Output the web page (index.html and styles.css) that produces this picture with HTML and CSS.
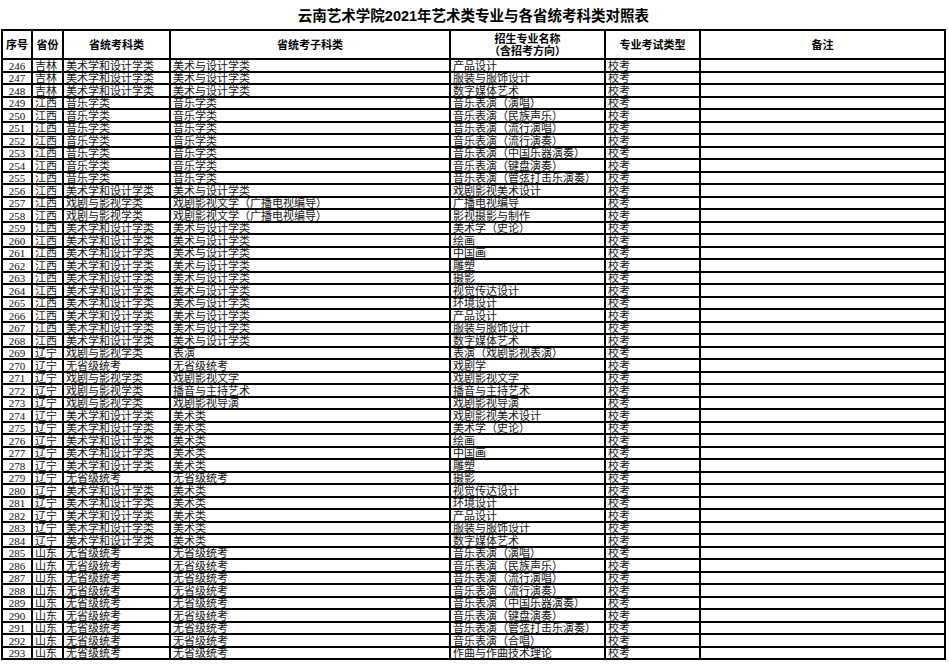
FILE: index.html
```html
<!DOCTYPE html>
<html lang="zh">
<head>
<meta charset="utf-8">
<title>云南艺术学院2021年艺术类专业与各省统考科类对照表</title>
<link rel="stylesheet" href="styles.css">
</head>
<body>
<h1 class="title">云南艺术学院2021年艺术类专业与各省统考科类对照表</h1>
<table class="sheet">
<colgroup>
<col class="c-no"><col class="c-prov"><col class="c-cat"><col class="c-sub"><col class="c-major"><col class="c-type"><col class="c-note">
</colgroup>
<thead>
<tr><th>序号</th><th>省份</th><th>省统考科类</th><th>省统考子科类</th><th>招生专业名称<br>（含招考方向）</th><th>专业考试类型</th><th>备注</th></tr>
</thead>
<tbody>
<tr><td class="no">246</td><td>吉林</td><td>美术学和设计学类</td><td>美术与设计学类</td><td>产品设计</td><td>校考</td><td></td></tr>
<tr><td class="no">247</td><td>吉林</td><td>美术学和设计学类</td><td>美术与设计学类</td><td>服装与服饰设计</td><td>校考</td><td></td></tr>
<tr><td class="no">248</td><td>吉林</td><td>美术学和设计学类</td><td>美术与设计学类</td><td>数字媒体艺术</td><td>校考</td><td></td></tr>
<tr><td class="no">249</td><td>江西</td><td>音乐学类</td><td>音乐学类</td><td>音乐表演（演唱）</td><td>校考</td><td></td></tr>
<tr><td class="no">250</td><td>江西</td><td>音乐学类</td><td>音乐学类</td><td>音乐表演（民族声乐）</td><td>校考</td><td></td></tr>
<tr><td class="no">251</td><td>江西</td><td>音乐学类</td><td>音乐学类</td><td>音乐表演（流行演唱）</td><td>校考</td><td></td></tr>
<tr><td class="no">252</td><td>江西</td><td>音乐学类</td><td>音乐学类</td><td>音乐表演（流行演奏）</td><td>校考</td><td></td></tr>
<tr><td class="no">253</td><td>江西</td><td>音乐学类</td><td>音乐学类</td><td>音乐表演（中国乐器演奏）</td><td>校考</td><td></td></tr>
<tr><td class="no">254</td><td>江西</td><td>音乐学类</td><td>音乐学类</td><td>音乐表演（键盘演奏）</td><td>校考</td><td></td></tr>
<tr><td class="no">255</td><td>江西</td><td>音乐学类</td><td>音乐学类</td><td>音乐表演（管弦打击乐演奏）</td><td>校考</td><td></td></tr>
<tr><td class="no">256</td><td>江西</td><td>美术学和设计学类</td><td>美术与设计学类</td><td>戏剧影视美术设计</td><td>校考</td><td></td></tr>
<tr><td class="no">257</td><td>江西</td><td>戏剧与影视学类</td><td>戏剧影视文学（广播电视编导）</td><td>广播电视编导</td><td>校考</td><td></td></tr>
<tr><td class="no">258</td><td>江西</td><td>戏剧与影视学类</td><td>戏剧影视文学（广播电视编导）</td><td>影视摄影与制作</td><td>校考</td><td></td></tr>
<tr><td class="no">259</td><td>江西</td><td>美术学和设计学类</td><td>美术与设计学类</td><td>美术学（史论）</td><td>校考</td><td></td></tr>
<tr><td class="no">260</td><td>江西</td><td>美术学和设计学类</td><td>美术与设计学类</td><td>绘画</td><td>校考</td><td></td></tr>
<tr><td class="no">261</td><td>江西</td><td>美术学和设计学类</td><td>美术与设计学类</td><td>中国画</td><td>校考</td><td></td></tr>
<tr><td class="no">262</td><td>江西</td><td>美术学和设计学类</td><td>美术与设计学类</td><td>雕塑</td><td>校考</td><td></td></tr>
<tr><td class="no">263</td><td>江西</td><td>美术学和设计学类</td><td>美术与设计学类</td><td>摄影</td><td>校考</td><td></td></tr>
<tr><td class="no">264</td><td>江西</td><td>美术学和设计学类</td><td>美术与设计学类</td><td>视觉传达设计</td><td>校考</td><td></td></tr>
<tr><td class="no">265</td><td>江西</td><td>美术学和设计学类</td><td>美术与设计学类</td><td>环境设计</td><td>校考</td><td></td></tr>
<tr><td class="no">266</td><td>江西</td><td>美术学和设计学类</td><td>美术与设计学类</td><td>产品设计</td><td>校考</td><td></td></tr>
<tr><td class="no">267</td><td>江西</td><td>美术学和设计学类</td><td>美术与设计学类</td><td>服装与服饰设计</td><td>校考</td><td></td></tr>
<tr><td class="no">268</td><td>江西</td><td>美术学和设计学类</td><td>美术与设计学类</td><td>数字媒体艺术</td><td>校考</td><td></td></tr>
<tr><td class="no">269</td><td>辽宁</td><td>戏剧与影视学类</td><td>表演</td><td>表演（戏剧影视表演）</td><td>校考</td><td></td></tr>
<tr><td class="no">270</td><td>辽宁</td><td>无省级统考</td><td>无省级统考</td><td>戏剧学</td><td>校考</td><td></td></tr>
<tr><td class="no">271</td><td>辽宁</td><td>戏剧与影视学类</td><td>戏剧影视文学</td><td>戏剧影视文学</td><td>校考</td><td></td></tr>
<tr><td class="no">272</td><td>辽宁</td><td>戏剧与影视学类</td><td>播音与主持艺术</td><td>播音与主持艺术</td><td>校考</td><td></td></tr>
<tr><td class="no">273</td><td>辽宁</td><td>戏剧与影视学类</td><td>戏剧影视导演</td><td>戏剧影视导演</td><td>校考</td><td></td></tr>
<tr><td class="no">274</td><td>辽宁</td><td>美术学和设计学类</td><td>美术类</td><td>戏剧影视美术设计</td><td>校考</td><td></td></tr>
<tr><td class="no">275</td><td>辽宁</td><td>美术学和设计学类</td><td>美术类</td><td>美术学（史论）</td><td>校考</td><td></td></tr>
<tr><td class="no">276</td><td>辽宁</td><td>美术学和设计学类</td><td>美术类</td><td>绘画</td><td>校考</td><td></td></tr>
<tr><td class="no">277</td><td>辽宁</td><td>美术学和设计学类</td><td>美术类</td><td>中国画</td><td>校考</td><td></td></tr>
<tr><td class="no">278</td><td>辽宁</td><td>美术学和设计学类</td><td>美术类</td><td>雕塑</td><td>校考</td><td></td></tr>
<tr><td class="no">279</td><td>辽宁</td><td>无省级统考</td><td>无省级统考</td><td>摄影</td><td>校考</td><td></td></tr>
<tr><td class="no">280</td><td>辽宁</td><td>美术学和设计学类</td><td>美术类</td><td>视觉传达设计</td><td>校考</td><td></td></tr>
<tr><td class="no">281</td><td>辽宁</td><td>美术学和设计学类</td><td>美术类</td><td>环境设计</td><td>校考</td><td></td></tr>
<tr><td class="no">282</td><td>辽宁</td><td>美术学和设计学类</td><td>美术类</td><td>产品设计</td><td>校考</td><td></td></tr>
<tr><td class="no">283</td><td>辽宁</td><td>美术学和设计学类</td><td>美术类</td><td>服装与服饰设计</td><td>校考</td><td></td></tr>
<tr><td class="no">284</td><td>辽宁</td><td>美术学和设计学类</td><td>美术类</td><td>数字媒体艺术</td><td>校考</td><td></td></tr>
<tr><td class="no">285</td><td>山东</td><td>无省级统考</td><td>无省级统考</td><td>音乐表演（演唱）</td><td>校考</td><td></td></tr>
<tr><td class="no">286</td><td>山东</td><td>无省级统考</td><td>无省级统考</td><td>音乐表演（民族声乐）</td><td>校考</td><td></td></tr>
<tr><td class="no">287</td><td>山东</td><td>无省级统考</td><td>无省级统考</td><td>音乐表演（流行演唱）</td><td>校考</td><td></td></tr>
<tr><td class="no">288</td><td>山东</td><td>无省级统考</td><td>无省级统考</td><td>音乐表演（流行演奏）</td><td>校考</td><td></td></tr>
<tr><td class="no">289</td><td>山东</td><td>无省级统考</td><td>无省级统考</td><td>音乐表演（中国乐器演奏）</td><td>校考</td><td></td></tr>
<tr><td class="no">290</td><td>山东</td><td>无省级统考</td><td>无省级统考</td><td>音乐表演（键盘演奏）</td><td>校考</td><td></td></tr>
<tr><td class="no">291</td><td>山东</td><td>无省级统考</td><td>无省级统考</td><td>音乐表演（管弦打击乐演奏）</td><td>校考</td><td></td></tr>
<tr><td class="no">292</td><td>山东</td><td>无省级统考</td><td>无省级统考</td><td>音乐表演（合唱）</td><td>校考</td><td></td></tr>
<tr><td class="no">293</td><td>山东</td><td>无省级统考</td><td>无省级统考</td><td>作曲与作曲技术理论</td><td>校考</td><td></td></tr>
</tbody>
</table>
</body>
</html>
```

FILE: styles.css
```css
html, body {
  margin: 0;
  padding: 0;
  background: #fff;
}
body {
  font-family: "Liberation Serif", "Noto Sans CJK SC", serif;
  color: #111;
}
.title {
  margin: 0;
  height: 29px;
  padding-top: 8px;
  box-sizing: border-box;
  width: 947px;
  text-align: center;
  font-family: "Liberation Sans", "Noto Sans CJK SC", sans-serif;
  font-size: 14.5px;
  line-height: 17px;
  font-weight: 700;
  color: #000;
}
.sheet {
  margin-left: 1px;
  border-collapse: separate;
  border-spacing: 0;
  table-layout: fixed;
  width: 945px;
  border-top: 2px solid #000;
  border-left: 2px solid #000;
}
.c-no { width: 30px; }
.c-prov { width: 31px; }
.c-cat { width: 107px; }
.c-sub { width: 280px; }
.c-major { width: 155px; }
.c-type { width: 95px; }
.c-note { width: 245px; }
.sheet th,
.sheet td {
  border-right: 2px solid #000;
  border-bottom: 2px solid #000;
  padding: 0;
  overflow: hidden;
  white-space: nowrap;
}
.sheet th {
  height: 27px;
  font-family: "Liberation Sans", "Noto Sans CJK SC", sans-serif;
  font-size: 11px;
  line-height: 12px;
  font-weight: 700;
  text-align: center;
  vertical-align: middle;
  color: #000;
}
.sheet td {
  height: 10.5px;
  font-size: 11px;
  line-height: 10px;
  text-align: left;
  vertical-align: bottom;
  padding-left: 2px;
}
.sheet td.no {
  text-align: center;
  padding-left: 0;
}
```
